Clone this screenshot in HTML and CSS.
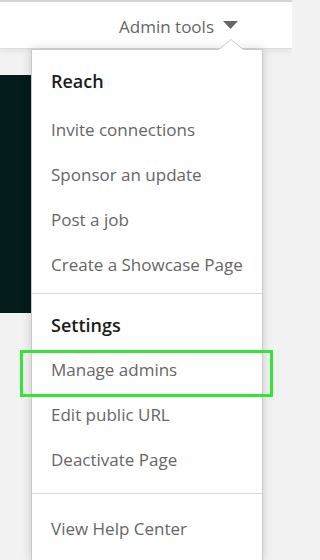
FILE: index.html
```html
<!DOCTYPE html>
<html lang="en">
<head>
<meta charset="utf-8">
<title>Admin tools</title>
<link rel="stylesheet" href="styles.css">
</head>
<body>
<header class="topbar">
  <button class="admin-toggle">
    <span>Admin tools</span>
    <svg class="caret" width="15" height="8" viewBox="0 0 15 8"><polygon points="0,0 15,0 7.5,8" fill="#666"/></svg>
  </button>
</header>
<main class="page">
  <div class="hero"></div>
</main>

<div class="dropdown">
  <svg class="notch" width="24" height="11" viewBox="0 0 24 11"><polygon points="0,10.5 12,0.5 24,10.5" fill="#fff" stroke="#c9c9c9" stroke-width="1"/><rect x="0" y="10" width="24" height="2" fill="#fff"/></svg>
  <section class="group first">
    <h3 class="group-title">Reach</h3>
    <a class="item">Invite connections</a>
    <a class="item">Sponsor an update</a>
    <a class="item">Post a job</a>
    <a class="item">Create a Showcase Page</a>
  </section>
  <section class="group second">
    <h3 class="group-title">Settings</h3>
    <a class="item">Manage admins</a>
    <a class="item">Edit public URL</a>
    <a class="item">Deactivate Page</a>
  </section>
  <section class="group last">
    <a class="item">View Help Center</a>
  </section>
</div>
<div class="highlight"></div>
</body>
</html>
```

FILE: styles.css
```css
html, body {
  margin: 0;
  padding: 0;
}
html {
  background: #f2f2f2;
}
body {
  width: 292px;
  height: 560px;
  overflow: hidden;
  background: #f2f2f2;
  font-family: "Open Sans", "Noto Sans", sans-serif;
  position: relative;
}
.topbar {
  height: 46px;
  border-top: 2px solid #d4d4d4;
  border-bottom: 1px solid #dcdcdc;
  background: #fff;
  display: flex;
  justify-content: flex-end;
  align-items: center;
  padding-right: 54px;
  box-shadow: 0 2px 6px rgba(0,0,0,0.07);
  position: relative;
  z-index: 1;
}
.admin-toggle {
  border: 0;
  background: none;
  padding: 0;
  display: flex;
  align-items: center;
  gap: 9px;
  font-family: inherit;
  font-size: 17px;
  color: #666;
  margin-top: 2px;
}
.caret {
  display: block;
  margin-top: -3px;
}
.page {
  padding-top: 26px;
}
.hero {
  width: 60px;
  height: 238px;
  background: #041b1b;
}
.dropdown {
  position: absolute;
  left: 31px;
  top: 49px;
  width: 230px;
  height: 510px;
  background: #fff;
  border: 1px solid #c9c9c9;
  border-bottom: 0;
  box-shadow: 0 0 9px rgba(0,0,0,0.16);
  z-index: 2;
}
.notch {
  position: absolute;
  left: 187px;
  top: -11px;
  display: block;
}
.group {
  padding: 8px 0 6px;
  border-bottom: 1px solid #dadada;
}
.group.second {
  padding-bottom: 11px;
}
.group.second .group-title {
  margin-bottom: 0;
}
.group.last {
  border-bottom: 0;
  padding-top: 12px;
}
.group-title {
  margin: 0 0 4px;
  height: 45px;
  display: flex;
  align-items: center;
  padding-left: 19px;
  font-size: 18px;
  font-weight: 600;
  color: #1b1b1b;
}
.item {
  height: 45px;
  display: flex;
  align-items: center;
  padding-left: 19px;
  font-size: 17px;
  color: #666;
  text-decoration: none;
}
.highlight {
  position: absolute;
  left: 20px;
  top: 350px;
  width: 247px;
  height: 41px;
  border: 3px solid #35e535;
  z-index: 3;
}
```
